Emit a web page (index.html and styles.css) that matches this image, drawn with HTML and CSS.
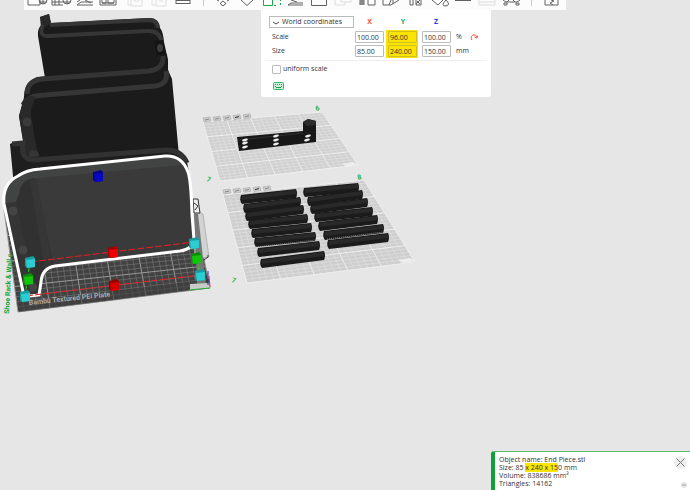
FILE: index.html
```html
<!DOCTYPE html>
<html lang="en">
<head>
<meta charset="utf-8">
<title>Prepare</title>
<link rel="stylesheet" href="styles.css">
</head>
<body>
<svg class="scene" viewBox="0 0 690 490" preserveAspectRatio="xMinYMin meet" role="img" aria-label="Build plates">
  <g id="plates"></g>
  <text class="plate-label" transform="translate(29 305) rotate(-6)">Bambu Textured PEI Plate</text>

  <!-- plate side clips -->
  <path d="M192 213h9l2 1 6 43-14 2z" fill="#d2d2d2" stroke="#999" stroke-width=".6"/>
  <path d="M193 199h5l2 14h-6z" fill="#eee" stroke="#333"/>
  <path d="M194 203l4 3-3 4" fill="none" stroke="#333"/>
  <path d="M194 214h4l8 70h-9z" fill="#777"/>
  <path d="M204 260l4-3v-2" fill="none" stroke="#333"/>
  <path d="M190 284l19-1 1 5-20 2z" fill="#c9cbc9"/>
  <path d="M189 290l21-2" stroke="#20b040"/>
  <path d="M208 271v14" stroke="#2929a0"/>
  <path d="M209 276l1 11" stroke="#c33"/>

  <!-- rear end piece -->
  <path d="M40 17L49 14 51 23 150 18Q159 18 160 28 163 31 164 42L168 60 168 72 45 78 38 36Q37 28 42 25Z" fill="#1b1b1b"/>
  <path d="M40 17l9-3 2 10-10 4z" fill="#282828"/>
  <path d="M50 25L149 20Q157 20 158 28" fill="none" stroke="#363636" stroke-width="4"/>
  <path d="M43 25Q38 36 48 36L147 31Q160 30 162 43" fill="none" stroke="#363636" stroke-width="4"/>
  <path d="M154 41l9-1 2 14-8 1z" fill="#141414"/>
  <ellipse cx="160" cy="48" rx="3" ry="4" fill="#3e3e3e"/>
  <!-- middle end piece -->
  <path d="M24 97Q24 82 37 77L150 69 158 55 167 54 168 70 172 79 179 156 26 160 19 116 23 102Z" fill="#1b1b1b"/>
  <path d="M27 94Q27 81 42 79L149 71Q164 69 163 56" fill="none" stroke="#343434" stroke-width="5"/>
  <path d="M166 71Q169 84 155 86L45 95Q28 95 23 105" fill="none" stroke="#363636" stroke-width="5"/>
  <path d="M19 116L23 101Q28 94 36 97 31 105 31 116L38 157 26 157Z" fill="#292929"/>
  <circle cx="27" cy="122" r="4.500" fill="#3a3a3a"/>
  <circle cx="34" cy="155" r="5" fill="#353535"/>
  <!-- near end piece -->
  <path d="M10 144L14 142 25 141 24 153 30 157 165 148Q181 147 187 162L191 182 14 187Z" fill="#1e1e1e"/>
  <path d="M12 144L23 143Q20 160 34 160L165 150Q181 149 187 163" fill="none" stroke="#323232" stroke-width="5"/>

  <!-- selected end piece -->
  <path d="M4 204Q2 184 18 176 26 170 40 169L165 156Q182 155 188 172 191 180 192 215L194 240Q193 249 180 251L55 266Q42 268 41 282L38 295 24 296Z" fill="#3a3a3a"/>
  <path d="M4 203Q3 185 18 177 27 171 40 170L165 157Q179 156 183 165L37 178Q20 181 19 194L16 202Z" fill="#414442"/>
  <path d="M19 194Q21 179 35 178L54 267Q42 268 41 282L38 295 24 296 16 202Z" fill="#313131"/>
  <path d="M16 202L4 204 24 296 36 294Z" fill="#353535"/>
  <path d="M30 181L37 179 53 267 45 271Z" fill="#363636"/>
  <g fill="#444"><circle cx="13" cy="211" r="4.500"/><circle cx="23" cy="250" r="4.500"/><ellipse cx="33" cy="287" rx="4" ry="5"/></g>
  <path d="M4 204Q2 184 18 176 26 170 40 169L165 156Q182 155 188 172 191 180 192 215L194 240Q193 249 180 251L55 266Q42 268 41 282L39 295 30 296M4 204L24 296" fill="none" stroke="#fff" stroke-width="3"/>
  <text class="plate-name" transform="translate(9 314) rotate(-87)">Shoe Rack &amp; Wall c..</text>
  <g stroke="#e91e1e" stroke-dasharray="7 2" fill="none"><path d="M30 262L194 242M26 296L200 275"/></g>
  <path d="M30 262L25 296M194 243L200 274" stroke="#28d628" stroke-dasharray="4 2"/>
  <g id="handles"></g>

  <!-- single part plate -->
  <path d="M237 137L303 131V122L308 119 316 121V142L239 151Z" fill="#181818"/>
  <path d="M303 122l5-3 8 2v4l-9 1z" fill="#2c2c2c"/>
  <path d="M239 140L303 133" stroke="#303030"/>
  <g id="slots" fill="#ececec"></g>
  <g id="rods"></g>
  <g class="plate-number">
    <text transform="translate(316 111) rotate(-14)">6</text><text transform="translate(206 181) rotate(20)">7</text>
    <text transform="translate(358 180) rotate(-14)">8</text><text transform="translate(231 282) rotate(20)">7</text>
  </g>
</svg>

<header class="toolbar" id="toolbar" aria-label="Tools"></header>

<main>
  <form class="panel">
    <div class="row">
      <select class="coords" aria-label="Coordinate system"><option>World coordinates</option></select>
      <span class="axis x">X</span><span class="axis y">Y</span><span class="axis z">Z</span>
    </div>
    <div class="row">
      <span class="name">Scale</span>
      <input class="num" aria-label="Scale X" value="100.00">
      <span class="mark"><input class="num" aria-label="Scale Y" value="96.00"></span>
      <input class="num" aria-label="Scale Z" value="100.00">
      <span class="unit">%</span>
      <button type="button" class="reset" aria-label="Reset scale"><svg viewBox="0 0 8 8"><path d="M2 7A3 3 0 1 1 7 4M4.500 4L7 5 8 2.500" fill="none" stroke="#f4502e"/></svg></button>
    </div>
    <div class="row">
      <span class="name">Size</span>
      <input class="num" aria-label="Size X" value="85.00">
      <span class="mark"><input class="num" aria-label="Size Y" value="240.00"></span>
      <input class="num" aria-label="Size Z" value="150.00">
      <span class="unit">mm</span>
    </div>
    <hr>
    <label class="uniform"><input type="checkbox">uniform scale</label>
    <button type="button" class="keys" aria-label="Keyboard shortcuts"><svg viewBox="0 0 12 8"><rect x=".5" y=".5" width="10" height="7" rx="1" fill="#ccefd9" stroke="#35b768"/><path d="M2 2.500h1m1 0h1m1 0h1m1 0h1M2 4.500h1m5 0h1M3 5.500h5" stroke="#16a34d"/></svg></button>
  </form>
</main>

<aside class="info">
  <p>Object name: End Piece.stl</p>
  <p>Size: 85 <mark>x 240 x 15</mark>0 mm</p>
  <p>Volume: 838686 mm³</p>
  <p>Triangles: 14162</p>
  <button class="close" aria-label="Close"><svg viewBox="0 0 13 13"><circle cx="6.500" cy="6.500" r="6.500" fill="#eee"/><path d="M2.500 2.500l8 8m0-8l-8 8" stroke="#777"/></svg></button>
  <button class="less" aria-label="Collapse"><svg viewBox="0 0 6 6"><circle cx="3" cy="3" r="3" fill="#e4e4e4"/><path d="M1 3h4" stroke="#aaa"/></svg></button>
</aside>
<script src="app.js"></script>
</body>
</html>
```
FILE: styles.css
```css
* { box-sizing: border-box; }
body {
  margin: 0;
  min-height: 100vh;
  display: flex;
  flex-direction: column;
  overflow: hidden;
  background: #e6e6e6;
  color: #333;
  font: 7px/8px "Open Sans", "Noto Sans", sans-serif;
}
button { padding: 0; border: 0; background: none; display: block; }
svg { display: block; }
.scene { position: absolute; inset: 0; width: 100%; z-index: -1; }
.plate-name { font: bold 7px Roboto, sans-serif; fill: #12a53c; }
.plate-label { font: bold 7px Roboto, sans-serif; fill: #aaa; }
.plate-number { font: bold 7px Roboto, sans-serif; fill: #16b04a; }

.toolbar {
  display: flex;
  align-self: flex-start;
  height: 10px;
  margin-left: 24px;
  padding: 0 3px 0 1px;
  background: #fcfcfc;
}
.toolbar svg { width: 24px; height: 10px; fill: none; stroke: #606060; }
.toolbar .faint svg { stroke: #ddd; }
.toolbar .active svg { stroke: #17a84b; }
.toolbar .sep { width: 16px; height: 6px; display: flex; justify-content: center; }
.toolbar .sep::before { content: ""; width: 1px; background: #ccc; }
.toolbar .gap { width: 2px; }

main { margin-left: 261px; display: flex; }
.panel {
  width: 230px;
  padding: 6px 8px 7px;
  background: #fff;
  border-radius: 0 0 3px 3px;
}
.row {
  display: grid;
  grid-template-columns: 86px 33px 34px 32px 12px 1fr;
  align-items: center;
  height: 14px;
}
.row:first-child { height: 12px; margin-bottom: 2px; }
.name { padding-left: 3px; }
.coords {
  appearance: none;
  width: 85px;
  height: 12px;
  padding: 0 0 0 12px;
  border: 1px solid #bbb;
  border-radius: 0;
  color: inherit;
  font: inherit;
  background: #fff url("data:image/svg+xml,%3Csvg xmlns='http://www.w3.org/2000/svg' width='6' height='4'%3E%3Cpath d='M0 1l3 2 3-2' fill='none' stroke='%23444'/%3E%3C/svg%3E") 3px 4px no-repeat;
}
.axis { font-weight: bold; text-align: center; padding-right: 4px; }
.x { color: #f4502e; }
.y { color: #20a552; }
.z { color: #3434e0; }
.num {
  width: 29px;
  height: 12px;
  padding: 0 1px;
  border: 1px solid #bbb;
  border-radius: 1px;
  background: transparent;
  color: inherit;
  font: inherit;
}
.mark { margin-left: -2px; padding: 1px 0 1px 2px; width: 32px; height: 14px; background: #fbe500; display: flex; }
.mark .num { border-color: #d0c020; }
.unit { padding-left: 2px; }
.reset { margin-left: 4px; width: 8px; }
hr { margin: 2px -3px 3px; border: 0; border-top: 1px solid #eee; }
.uniform { display: flex; align-items: center; gap: 2px; margin-left: 3px; height: 10px; }
.uniform input { appearance: none; width: 9px; height: 9px; margin: 0; border: 1px solid #bbb; border-radius: 1px; }
.keys { width: 12px; margin: 8px 0 0 4px; }

.info {
  position: fixed;
  right: 0;
  bottom: 0;
  width: 199px;
  padding: 4px 4px 2px;
  border-left: 4px solid #129f35;
  border-top: 1px solid #5dbb76;
  border-radius: 3px 0 0 0;
  background: #fff;
}
.info p { margin: 0; }
.info mark { background: #fbe500; color: inherit; }
.close { position: absolute; right: 3px; top: 4px; width: 13px; }
.less { position: absolute; right: 3px; bottom: 2px; width: 6px; }
```
FILE: app.js
```js
const $ = id => document.getElementById(id);

// Tool icons, clipped by the top edge of the window.
const icons = [
  ['', 'Add', 'M3 0v5h12V0M18 0v4M15 2h6M14 0a4 4 0 1 0 8 0'],
  ['', 'Add plate', 'M3 0v5h11M3 2h11M6 0v5M10 0v5M18 0v4M15 2h6M14 0a4 4 0 1 0 8 0'],
  ['', 'Orient', 'M4 2l3-2M4 5l4-3h12M4 5h16M12 0l6 3'],
  ['', 'Arrange', 'M3 0v5h16V0M5 0v3h4V0M11 0v3h6V0M5 3h12'],
  ['gap'],
  ['faint', 'Copy', 'M5 0v5h3M8 0v6h11V0M11 0a3 3 0 0 0 5 0'],
  ['faint', 'Paste', 'M5 0v5h3M9 0v6h10V0M12 1h4'],
  ['', 'Layers', 'M5 0v4M19 0v4M5 .5h14M5 3.500h14'],
  ['sep'],
  ['', 'Move', 'M6 0l2 1M18 0l-2 1M12 1l3 2.500-3 2.500-3-2.500z'],
  ['', 'Rotate', 'M6 0l6 5.500 6-5.500'],
  ['active', 'Scale', 'M4.500 0v5.500h9V0M15 5.500h2M21.500 0v1M21.500 3v2'],
  ['', 'Lay flat', 'M5 5l3-2h12M5 5h15M8 0l6 2'],
  ['', 'Cut', 'M4.500 0v5.500h15V0'],
  ['faint', 'Boolean', 'M4 0v5h10V2h6V0M10 0v2h4'],
  ['', 'Split', 'M5 0v5M6 0v5M7 0v5M8 0v5M9 0v5M13 0v5h7V0'],
  ['', 'Support', 'M4 0v5h8l8-5M10 5l2-5M14 0v4'],
  ['', 'Seam', 'M7 0v5h3V0M13 0v5h5V0M14 1l3 3M17 0l-4 4'],
  ['', 'Paint', 'M5 0l6 5 5-5M19 0q-6 6 0 6 5-1 0-6'],
  ['', 'Text', 'M4 .5h16'],
  ['faint', 'Measure', 'M4 0v5h16V0M4 2h16'],
  ['', 'Assemble', 'M4 0l3 2h11l3-2M5 3h3v2H5zM17 3h3v2h-3zM8 2l2-2M16 2l-2-2'],
  ['sep'],
  ['', 'Assembly view', 'M6 0v5h13V0M12 0l3 1-4 2 3 2'],
];
$('toolbar').innerHTML = icons.map(([kind, label, d]) => label
  ? `<button class="${kind}" aria-label="${label}"><svg viewBox="0 0 24 10"><path d="${d}"/></svg></button>`
  : `<span class="${kind}"></span>`).join('');

// A plate is a quad (top left, top right, bottom right, bottom left) ruled into cells.
function plate([a, b, c, d], cols, rows, fill, minor, major) {
  const mix = (p, q, t) => [p[0] + (q[0] - p[0]) * t, p[1] + (q[1] - p[1]) * t];
  let out = `<polygon points="${[a, b, c, d].join(' ')}" fill="${fill}"/>`;
  const line = (p, q, i) =>
    `<path d="M${p}L${q}" stroke="${i % 5 ? minor : major}" stroke-width="${i % 5 ? 0.6 : 1}"/>`;
  for (let i = 0; i <= cols; i++) out += line(mix(a, b, i / cols), mix(d, c, i / cols), i);
  for (let i = 0; i <= rows; i++) out += line(mix(a, d, i / rows), mix(b, c, i / rows), i);
  return out;
}
const tabs = (x, y) => [0, 1, 2, 3, 4].map(i =>
  `<path d="M${x + i * 10} ${y - i * 0.8}l7-1 1 4-7 1z" fill="#ccc" stroke="#aaa" stroke-width=".6"/>` +
  `<path d="M${x + 2 + i * 10} ${y + 2 - i * 0.8}l4-1" stroke="${i === 3 ? '#333' : '#888'}"/>`).join('');
$('plates').innerHTML =
  plate([[203, 122], [322, 112], [358, 165], [220, 181]], 25, 20, '#d0d0d0', '#e3e3e3', '#efefef') +
  plate([[223, 195], [364, 180], [415, 262], [247, 283]], 25, 25, '#cecece', '#e3e3e3', '#efefef') +
  plate([[4, 210], [192, 200], [210, 288], [18, 312]], 30, 20, '#424242', '#777', '#999') +
  '<path d="M17 303L209 279v9L19 312z" fill="#3d3d3d" opacity=".6"/>' +
  '<path d="M342 164l11-2 5 3-11 2zM398 260l12-2 6 3-13 2z" fill="#ededed"/>' +
  tabs(203, 118) + tabs(223, 190);

const cubes = [[98, 176, '#0808c0', '#04048d'], [113, 252, '#e00', '#a50000'], [114, 285, '#d40000', '#960000'],
  [30, 262, '#2bcdd0', '#169da2'], [25, 296, '#2bcdd0', '#169da2'], [194, 243, '#2bcdd0', '#169da2'],
  [200, 275, '#2bcdd0', '#169da2'], [28, 279, '#12c40a', '#0b8a08'], [196, 258, '#12c40a', '#0b8a08']];
$('handles').innerHTML = cubes.map(([x, y, light, dark]) =>
  `<path d="M${x - 5} ${y - 4}l8-2 2 2v9l-8 1-2-2z" fill="${dark}"/><path d="M${x - 4} ${y - 2}l9-1v8l-8 1z" fill="${light}"/>`).join('');

$('slots').innerHTML = [[245, 140], [245, 143], [245, 147], [276, 136], [276, 140], [276, 144], [308, 136], [307, 140]]
  .map(([x, y]) => `<ellipse cx="${x}" cy="${y}" rx="3" ry="1.200" transform="rotate(-15 ${x} ${y})"/>`).join('');

const rods = [
  [240, 199, 297, 193], [243, 208, 301, 201], [245, 216, 304, 209], [248, 224, 308, 218],
  [251, 233, 312, 227], [254, 242, 316, 236], [257, 252, 320, 245], [260, 263, 325, 255],
  [303, 192, 359, 187], [307, 201, 363, 194], [310, 209, 368, 202], [314, 217, 373, 211],
  [318, 226, 378, 219], [323, 235, 384, 228], [327, 244, 389, 237]];
$('rods').innerHTML = rods.map(([x, y, u, v]) =>
  `<path d="M${x + 1} ${y - 4}L${u - 1} ${v - 4}q2 4 0 9L${x + 2} ${y + 5}q-3-3-1-9z" fill="#1b1b1b"/>` +
  `<path d="M${x + 2} ${y - 1}L${u - 1} ${v - 1}" stroke="#292929" stroke-width="4"/>`).join('') +
  '<path d="M256 247L316 240M327 239L384 232" stroke="#aaa" stroke-width=".7" stroke-dasharray="1 1"/>';
```
